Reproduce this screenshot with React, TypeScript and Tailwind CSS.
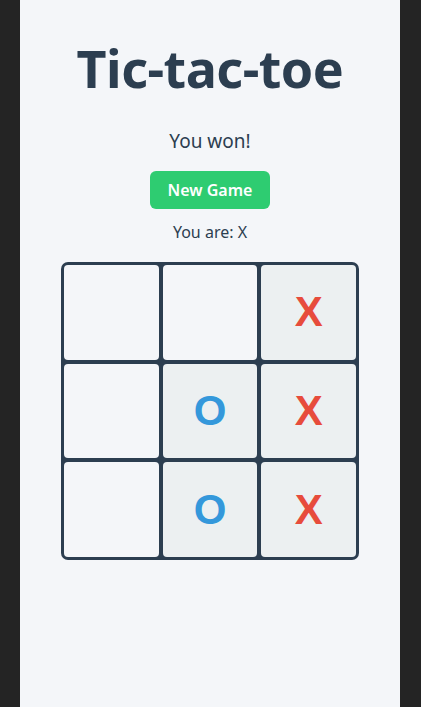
const board: (string | null)[] = [null, null, "X", null, "O", "X", null, "O", "X"];

function Cell({ value }: { value: string | null }) {
  return (
    <div
      className={`flex items-center justify-center rounded-[4px] ${value ? "bg-[#ecf0f1]" : "bg-[#f4f6f9]"}`}
    >
      {value === "X" && (
        <span className="text-[42px] font-bold leading-none text-[#e74c3c] [font-family:'Liberation_Sans',Arial,sans-serif]">X</span>
      )}
      {value === "O" && (
        <span className="text-[42px] font-bold leading-none text-[#3498db] [font-family:'Liberation_Sans',Arial,sans-serif]">O</span>
      )}
    </div>
  );
}

export default function App() {
  return (
    <div className="min-h-[707px] bg-[#242424] flex pl-[20px] [font-family:'Noto_Sans',sans-serif]">
      <div className="w-[380px] min-h-[707px] bg-[#f4f6f9] flex flex-col items-center text-[#2c3e50]">
        <h1 className="mt-[38px] text-[52px] font-bold leading-[60px] tracking-[-0.5px]">Tic-tac-toe</h1>
        <p className="mt-[30px] text-[19px] leading-[26px]">You won!</p>
        <button className="mt-[17px] w-[120px] h-[38px] rounded-[6px] bg-[#2ecc71] text-white text-[16px] font-semibold">
          New Game
        </button>
        <p className="mt-[12px] text-[16px] leading-[22px]">You are: X</p>
        <div className="mt-[19px] w-[298px] h-[298px] bg-[#2c3e50] rounded-[7px] p-[3px] grid grid-cols-3 grid-rows-3 gap-[4px]">
          {board.map((v, i) => (
            <Cell key={i} value={v} />
          ))}
        </div>
      </div>
    </div>
  );
}
